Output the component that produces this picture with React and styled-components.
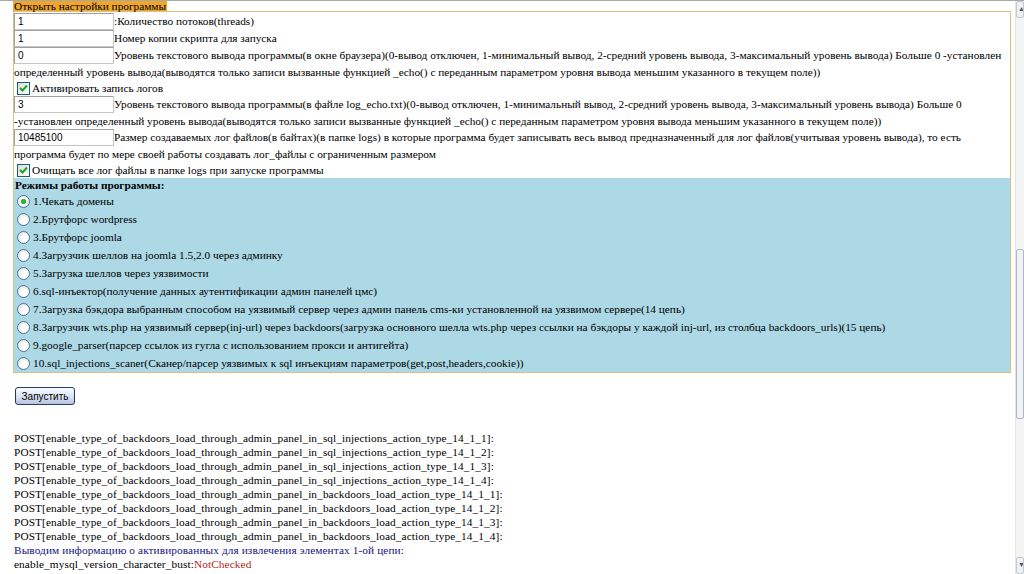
import React from "react";
import styled, { createGlobalStyle } from "styled-components";

const GlobalStyle = createGlobalStyle`
  html, body {
    margin: 0;
    padding: 0;
    overflow: hidden;
    background: #fff;
  }
  body {
    font-family: "Liberation Serif", "Times New Roman", serif;
    font-size: 11.3px;
    color: #000;
  }
`;

const modes = [
  "1.Чекать домены",
  "2.Брутфорс wordpress",
  "3.Брутфорс joomla",
  "4.Загрузчик шеллов на joomla 1.5,2.0 через админку",
  "5.Загрузка шеллов через уязвимости",
  "6.sql-инъектор(получение данных аутентификации админ панелей цмс)",
  "7.Загрузка бэкдора выбранным способом на уязвимый сервер через админ панель cms-ки установленной на уязвимом сервере(14 цепь)",
  "8.Загрузчик wts.php на уязвимый сервер(inj-url) через backdoors(загрузка основного шелла wts.php через ссылки на бэкдоры у каждой inj-url, из столбца backdoors_urls)(15 цепь)",
  "9.google_parser(парсер ссылок из гугла с использованием прокси и антигейта)",
  "10.sql_injections_scaner(Сканер/парсер уязвимых к sql инъекциям параметров(get,post,headers,cookie))",
];

const postLines = [
  "sql_injections_action_type_14_1_1",
  "sql_injections_action_type_14_1_2",
  "sql_injections_action_type_14_1_3",
  "sql_injections_action_type_14_1_4",
  "backdoors_load_action_type_14_1_1",
  "backdoors_load_action_type_14_1_2",
  "backdoors_load_action_type_14_1_3",
  "backdoors_load_action_type_14_1_4",
];

function CheckMark() {
  return (
    <svg width="9" height="8" viewBox="0 0 9 8">
      <path d="M1 4 L3.5 6.5 L8 1.5" fill="none" stroke="#21a121" strokeWidth="2" />
    </svg>
  );
}

function Checkbox() {
  return (
    <CheckBoxBox>
      <CheckMark />
    </CheckBoxBox>
  );
}

export default function App() {
  return (
    <Screen>
      <GlobalStyle />
      <Page>
        <Tab>Открыть настройки программы</Tab>
        <SettingsBox>
          <Settings>
            <InputRow>
              <Field>1</Field>:Количество потоков(threads)
            </InputRow>
            <InputRow>
              <Field>1</Field>Номер копии скрипта для запуска
            </InputRow>
            <InputRow>
              <Field>0</Field>Уровень текстового вывода программы(в окне браузера)(0-вывод отключен, 1-минимальный вывод, 2-средний уровень вывода, 3-максимальный уровень вывода) Больше 0 -установлен
              <br />
              определенный уровень вывода(выводятся только записи вызванные функцией _echo() с переданным параметром уровня вывода меньшим указанного в текущем поле))
            </InputRow>
            <CheckRow>
              <Checkbox />Активировать запись логов
            </CheckRow>
            <InputRow>
              <Field>3</Field>Уровень текстового вывода программы(в файле log_echo.txt)(0-вывод отключен, 1-минимальный вывод, 2-средний уровень вывода, 3-максимальный уровень вывода) Больше 0
              <br />
              -установлен определенный уровень вывода(выводятся только записи вызванные функцией _echo() с переданным параметром уровня вывода меньшим указанного в текущем поле))
            </InputRow>
            <InputRow>
              <Field>10485100</Field>Размер создаваемых лог файлов(в байтах)(в папке logs) в которые программа будет записывать весь вывод предназначенный для лог файлов(учитывая уровень вывода), то есть
              <br />
              программа будет по мере своей работы создавать лог_файлы с ограниченным размером
            </InputRow>
            <CheckRow>
              <Checkbox />Очищать все лог файлы в папке logs при запуске программы
            </CheckRow>
          </Settings>
          <Modes>
            <ModesTitle>Режимы работы программы:</ModesTitle>
            {modes.map((m, i) => (
              <RadioRow key={m}>
                <Radio $checked={i === 0} />
                {m}
              </RadioRow>
            ))}
          </Modes>
        </SettingsBox>
        <RunButton>Запустить</RunButton>
        <Log>
          {postLines.map((p) => (
            <div key={p}>
              POST[enable_type_of_backdoors_load_through_admin_panel_in_{p}]:
            </div>
          ))}
          <Info>Выводим информацию о активированных для извлечения элементах 1-ой цепи:</Info>
          <div>
            enable_mysql_version_character_bust:<Bad>NotChecked</Bad>
          </div>
        </Log>
      </Page>
      <Scrollbar>
        <ScrollArrow>▲</ScrollArrow>
        <ScrollTrack>
          <Thumb />
        </ScrollTrack>
        <ScrollArrow>▼</ScrollArrow>
      </Scrollbar>
    </Screen>
  );
}

const Screen = styled.div`
  display: flex;
  height: 573px;
  border-top: 1px solid #a8a8a8;
`;

const Page = styled.div`
  flex: 1;
  padding-left: 13px;
  padding-right: 6px;
  overflow: hidden;
`;

const Tab = styled.div`
  width: fit-content;
  background: #f0a62a;
  height: 10px;
  line-height: 10px;
  padding: 0 1px;
  white-space: nowrap;
`;

const SettingsBox = styled.div`
  border: 1px solid #d8c27e;
  width: 996px;
`;

const Settings = styled.div`
  background: #fff;
  padding-top: 1px;
`;

const InputRow = styled.div`
  line-height: 16px;
  white-space: nowrap;
`;

const Field = styled.span`
  display: inline-block;
  box-sizing: border-box;
  width: 100px;
  height: 17px;
  line-height: 15px;
  vertical-align: top;
  border: 1px solid #c6c6c6;
  border-top-color: #a0a0a0;
  border-left-color: #a0a0a0;
  padding-left: 3px;
  font-family: "Liberation Sans", Arial, sans-serif;
  font-size: 10px;
  background: #fff;
`;

const CheckRow = styled.div`
  display: flex;
  align-items: center;
  height: 16px;
  padding-left: 3px;
  white-space: nowrap;
`;

const CheckBoxBox = styled.span`
  box-sizing: border-box;
  width: 13px;
  height: 13px;
  margin-right: 2px;
  border: 1px solid #1c5a8c;
  background: linear-gradient(135deg, #dcdcd6, #fff);
  display: flex;
  align-items: center;
  justify-content: center;
`;

const Modes = styled.div`
  background: #add8e6;
`;

const ModesTitle = styled.div`
  font-weight: bold;
  height: 14px;
  line-height: 14px;
  padding-left: 1px;
`;

const RadioRow = styled.div`
  display: flex;
  align-items: center;
  height: 18px;
  padding-left: 3px;
  white-space: nowrap;
`;

const Radio = styled.span`
  box-sizing: border-box;
  width: 13px;
  height: 13px;
  border-radius: 50%;
  margin-right: 3px;
  border: 1px solid #4f7296;
  background: ${(p) =>
    p.$checked
      ? "radial-gradient(circle, #2fb52f 0 2.5px, #fff 3px, #dde2e4 100%)"
      : "radial-gradient(circle at 65% 65%, #fff 0 3px, #dcdcd6 100%)"};
  flex: none;
`;

const RunButton = styled.button`
  display: block;
  margin: 14px 0 0 2px;
  width: 60px;
  height: 18px;
  padding: 0;
  border: 1px solid #1f3c6e;
  border-radius: 3px;
  background: linear-gradient(#f8faff 0%, #dbe3f3 55%, #b6c3dc 100%);
  font-family: "Liberation Sans", Arial, sans-serif;
  font-size: 10px;
  color: #000;
`;

const Log = styled.div`
  margin-top: 26px;
  margin-left: 1px;
  line-height: 14px;
  white-space: nowrap;
  letter-spacing: 0.1px;
`;

const Info = styled.div`
  color: #14147c;
`;

const Bad = styled.span`
  color: #b22424;
`;

const Scrollbar = styled.div`
  width: 8px;
  display: flex;
  flex-direction: column;
  background: #f4f4f4;
  border-left: 1px solid #e4e4e4;
  overflow: hidden;
`;

const ScrollArrow = styled.div`
  height: 15px;
  font-size: 7px;
  line-height: 15px;
  color: #555;
  border: 1px solid #c3c9d4;
  border-radius: 2px;
  background: #eef0f4;
  overflow: hidden;
  padding-left: 1px;
`;

const ScrollTrack = styled.div`
  flex: 1;
  padding-top: 231px;
`;

const Thumb = styled.div`
  height: 168px;
  border: 1px solid #b0b8c8;
  border-radius: 2px;
  background: #f0f2f6;
`;
